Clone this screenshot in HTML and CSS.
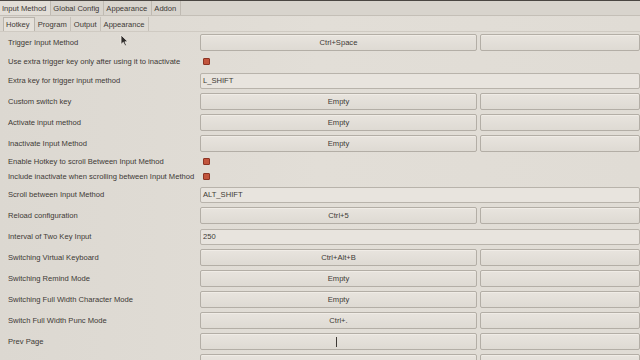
FILE: index.html
```html
<!DOCTYPE html>
<html>
<head>
<meta charset="utf-8">
<link rel="stylesheet" href="styles.css">
</head>
<body>
<div class="window">
  <div class="tabs main-tabs">
    <span class="tab active">Input Method</span>
    <span class="tab">Global Config</span>
    <span class="tab">Appearance</span>
    <span class="tab">Addon</span>
  </div>
  <div class="tabs sub-tabs">
    <span class="tab active">Hotkey</span>
    <span class="tab">Program</span>
    <span class="tab">Output</span>
    <span class="tab">Appearance</span>
  </div>
  <div class="form">
    <div class="row"><span class="label">Trigger Input Method</span><span class="btn">Ctrl+Space</span><span class="btn"></span></div>
    <div class="row check-row tall"><span class="label">Use extra trigger key only after using it to inactivate</span><span class="check"></span></div>
    <div class="row entry-row"><span class="label">Extra key for trigger input method</span><span class="entry">L_SHIFT</span></div>
    <div class="row"><span class="label">Custom switch key</span><span class="btn">Empty</span><span class="btn"></span></div>
    <div class="row"><span class="label">Activate input method</span><span class="btn">Empty</span><span class="btn"></span></div>
    <div class="row"><span class="label">Inactivate Input Method</span><span class="btn">Empty</span><span class="btn"></span></div>
    <div class="row check-row"><span class="label">Enable Hotkey to scroll Between Input Method</span><span class="check"></span></div>
    <div class="row check-row"><span class="label">Include inactivate when scrolling between Input Method</span><span class="check"></span></div>
    <div class="row entry-row"><span class="label">Scroll between Input Method</span><span class="entry">ALT_SHIFT</span></div>
    <div class="row"><span class="label">Reload configuration</span><span class="btn">Ctrl+5</span><span class="btn"></span></div>
    <div class="row entry-row"><span class="label">Interval of Two Key Input</span><span class="entry">250</span></div>
    <div class="row"><span class="label">Switching Virtual Keyboard</span><span class="btn">Ctrl+Alt+B</span><span class="btn"></span></div>
    <div class="row"><span class="label">Switching Remind Mode</span><span class="btn">Empty</span><span class="btn"></span></div>
    <div class="row"><span class="label">Switching Full Width Character Mode</span><span class="btn">Empty</span><span class="btn"></span></div>
    <div class="row"><span class="label">Switch Full Width Punc Mode</span><span class="btn">Ctrl+.</span><span class="btn"></span></div>
    <div class="row"><span class="label">Prev Page</span><span class="btn"><span class="ibeam"></span></span><span class="btn"></span></div>
    <div class="row"><span class="label"></span><span class="btn"></span><span class="btn"></span></div>
  </div>
  <svg class="pointer" width="9" height="13" viewBox="0 0 9 13"><path d="M1 1 L1 10.5 L3.3 8.3 L5 12 L6.5 11.3 L4.9 7.8 L8 7.8 Z" fill="#2f2c2a" stroke="#f2efe9" stroke-width="0.8"/></svg>
</div>
</body>
</html>
```
FILE: styles.css
```css
html, body {
  margin: 0;
  padding: 0;
  background: #dedad3;
}
.window {
  position: relative;
  width: 640px;
  height: 360px;
  overflow: hidden;
  background: linear-gradient(90deg, #dcd8d1 0%, #e2ded7 50%, #e0dcd5 100%);
  font-family: "Liberation Sans", Arial, sans-serif;
  font-size: 7.6px;
  color: #3d3935;
  border-top: 1px solid #4a4642;
  box-sizing: border-box;
}
.tabs {
  display: flex;
  align-items: stretch;
}
.main-tabs {
  height: 15px;
  background: #d8d4cd;
  border-bottom: 1px solid #c4bfb7;
  box-sizing: border-box;
}
.main-tabs .tab {
  display: flex;
  align-items: center;
  padding: 0 4px 0 2px;
  border-right: 1px solid #bfbab2;
}
.main-tabs .tab.active {
  background: #e2ded7;
}
.sub-tabs {
  height: 16px;
  padding: 1px 0 0 3px;
  border-bottom: 1px solid #cfcac2;
  box-sizing: border-box;
}
.sub-tabs .tab {
  display: flex;
  align-items: center;
  padding: 0 3px 0 3px;
  border-right: 1px solid #c6c1b9;
}
.sub-tabs .tab.active {
  border: 1px solid #b9b4ac;
  border-bottom: none;
  background: #e5e1da;
  padding: 0 4px 0 2px;
}
.form {
  display: flex;
  flex-direction: column;
  padding: 0 0 0 8px;
}
.row {
  display: grid;
  grid-template-columns: 189px 277px 1fr;
  column-gap: 3px;
  align-items: center;
  height: 21px;
}
.check-row {
  height: 15px;
}
.check-row.tall {
  height: 17px;
}
.label {
  white-space: nowrap;
}
.btn {
  height: 15px;
  border: 1px solid #b3aea6;
  border-radius: 2px;
  background: linear-gradient(#e8e4de, #dedad3);
  display: flex;
  align-items: center;
  justify-content: center;
  color: #3d3935;
  box-shadow: inset 0 1px 0 #f0ece6;
}
.entry {
  grid-column: 2 / 4;
  height: 14px;
  border: 1px solid #b8b3ab;
  border-radius: 2px;
  background: #e8e4de;
  display: flex;
  align-items: center;
  padding-left: 2px;
}
.check {
  width: 5px;
  height: 5px;
  margin-left: 3px;
  background: #c2553d;
  border: 1px solid #8c3424;
  border-radius: 1px;
}
.ibeam {
  display: block;
  width: 1px;
  height: 10px;
  background: #3d3935;
  margin-left: -4px;
}
.pointer {
  position: absolute;
  left: 120px;
  top: 33px;
}
```
